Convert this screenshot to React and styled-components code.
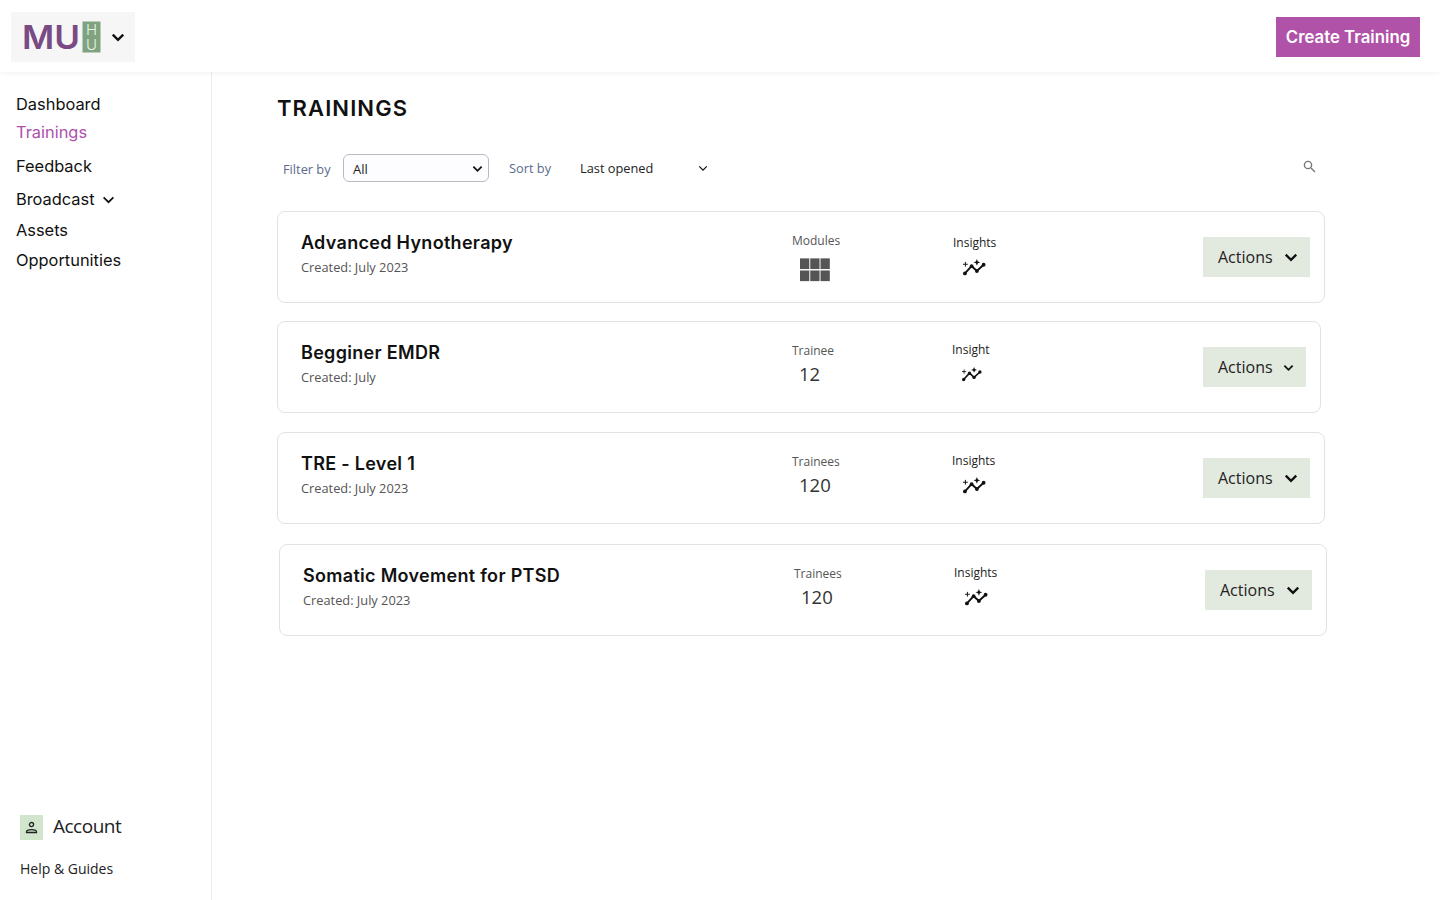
import React from "react";
import styled, { createGlobalStyle } from "styled-components";

const Global = createGlobalStyle`
  html, body { margin: 0; padding: 0; background: #fff; }
  body { font-family: "Open Sans", "Liberation Sans", sans-serif; color: #111; }
  * { box-sizing: border-box; }
`;

const Page = styled.div`
  width: 1440px;
  height: 900px;
  display: flex;
  flex-direction: column;
  overflow: hidden;
`;

const Header = styled.header`
  height: 72px;
  flex: none;
  display: flex;
  align-items: flex-start;
  justify-content: space-between;
  padding: 12px 20px 0 11px;
  box-shadow: 0 1px 5px rgba(0, 0, 0, 0.06);
  position: relative;
`;

const LogoBox = styled.div`
  width: 124px;
  height: 50px;
  background: #f6f6f6;
  display: flex;
  align-items: center;
  padding-left: 10px;
`;

const LogoMark = styled.svg`
  flex: none;
  display: block;
  overflow: visible;
`;

const LogoChevron = styled.span`
  margin-left: 10px;
  display: flex;
`;

const CreateButton = styled.button`
  margin-top: 5px;
  width: 144px;
  height: 40px;
  border: 0;
  background: #b052a8;
  color: #fff;
  font-family: Inter, sans-serif;
  font-weight: 600;
  font-size: 16.8px;
  padding: 0;
`;

const Body = styled.div`
  flex: 1;
  display: flex;
  min-height: 0;
`;

const Sidebar = styled.aside`
  width: 212px;
  flex: none;
  border-right: 1px solid #ececec;
  display: flex;
  flex-direction: column;
  padding: 22px 0 21px;
`;

const Nav = styled.nav`
  display: flex;
  flex-direction: column;
  padding-left: 16px;
`;

const NavItem = styled.a`
  font-family: Inter, sans-serif;
  font-size: 16.4px;
  line-height: 20px;
  height: 20px;
  margin-bottom: ${(p) => p.$gap}px;
  color: ${(p) => (p.$active ? "#ae4fae" : "#111")};
  display: flex;
  align-items: center;
  gap: 7px;
`;

const SideFoot = styled.div`
  margin-top: auto;
  padding-left: 20px;
`;

const AccountRow = styled.div`
  display: flex;
  align-items: center;
  gap: 10px;
  height: 25px;
  margin-bottom: 19px;
`;

const AccountLabel = styled.span`
  font-size: 19px;
  line-height: 22px;
  letter-spacing: -0.5px;
  color: #222;
  margin-top: -3px;
`;

const AccountIcon = styled.span`
  width: 23px;
  height: 25px;
  background: #d1e5cd;
  display: flex;
  align-items: center;
  justify-content: center;
`;

const Help = styled.div`
  font-size: 14px;
  line-height: 20px;
  color: #222;
`;

const Main = styled.main`
  flex: 1;
  padding: 22px 0 0 65px;
`;

const Title = styled.h1`
  margin: 0;
  font-family: Inter, sans-serif;
  font-weight: 600;
  font-size: 22px;
  line-height: 28px;
  letter-spacing: 1.1px;
  color: #111;
`;

const Toolbar = styled.div`
  margin-top: 32px;
  width: 1048px;
  height: 28px;
  display: flex;
  align-items: center;
  padding-left: 6px;
`;

const ToolLabel = styled.span`
  font-size: 12.8px;
  color: #5b6b8c;
  width: ${(p) => p.$w}px;
  margin-top: ${(p) => p.$top || 0}px;
`;

const SelectBox = styled.div`
  width: 146px;
  height: 28px;
  border: 1px solid #b9bcc2;
  border-radius: 6px;
  background: #fdfdff;
  display: flex;
  align-items: center;
  justify-content: space-between;
  padding: 1px 5px 0 9px;
  font-size: 13px;
  color: #222;
  margin-right: 20px;
`;

const SortValue = styled.div`
  width: 128px;
  display: flex;
  align-items: center;
  justify-content: space-between;
  font-size: 12.8px;
  color: #222;
`;

const SearchGlyph = styled.svg`
  margin-left: auto;
  margin-right: 9px;
  margin-top: -3px;
`;

const CardList = styled.div`
  margin-top: 29px;
  display: flex;
  flex-direction: column;
`;

const Card = styled.article`
  width: ${(p) => p.$w}px;
  height: 92px;
  margin-left: ${(p) => p.$x}px;
  margin-bottom: ${(p) => p.$gap}px;
  border: 1px solid #e2e2e2;
  border-radius: 8px;
  display: grid;
  grid-template-columns: 491px 160px 1fr auto;
  padding: 0 14px 0 23px;
  align-items: start;
`;

const CardName = styled.h2`
  margin: 20px 0 0;
  font-family: Inter, sans-serif;
  font-weight: 600;
  font-size: 18px;
  line-height: 22px;
  letter-spacing: 0.3px;
  color: #111;
`;

const Created = styled.p`
  margin: 5px 0 0;
  font-size: 12.8px;
  line-height: 16px;
  color: #555;
`;

const Stat = styled.div`
  padding-top: ${(p) => p.$top}px;
  padding-left: ${(p) => p.$left || 0}px;
  display: flex;
  flex-direction: column;
`;

const StatLabel = styled.span`
  font-size: 12px;
  line-height: 16px;
  color: ${(p) => (p.$dark ? "#222" : "#555")};
`;

const StatValue = styled.span`
  font-size: 18.5px;
  line-height: 24px;
  margin-left: 7px;
  color: #333;
  margin-top: 3px;
`;

const GridIcon = styled.svg`
  margin: 9px 0 0 8px;
`;

const SparkIcon = styled.svg`
  margin: ${(p) => p.$top}px 0 0 ${(p) => p.$x}px;
`;

const ActionsButton = styled.button`
  margin-top: 25px;
  width: ${(p) => p.$w}px;
  height: 40px;
  border: 0;
  background: #e2e9df;
  color: #222;
  font-family: "Open Sans", sans-serif;
  font-size: 16px;
  display: flex;
  align-items: center;
  justify-content: space-between;
  padding: 0 12px 0 15px;
`;

const Chevron = ({ size = 12, stroke = "#111", width = 2 }) => (
  <svg width={size} height={size} viewBox="0 0 12 12" fill="none">
    <path d="M1.5 4 6 8.5 10.5 4" stroke={stroke} strokeWidth={width} />
  </svg>
);

const Logo = () => (
  <LogoMark width="80" height="32" viewBox="0 0 80 32">
    <text x="1" y="28" fontFamily="Inter, sans-serif" fontWeight="600" fontSize="33" fill="#7a4a85" textLength="58" lengthAdjust="spacingAndGlyphs">
      MU
    </text>
    <rect x="61.5" y="0.5" width="18" height="31" fill="#7fa37f" />
    <text x="70.5" y="13.8" textAnchor="middle" fontFamily="Inter, sans-serif" fontWeight="300" fontSize="15" fill="#e9f1e8">
      H
    </text>
    <text x="70.5" y="29" textAnchor="middle" fontFamily="Inter, sans-serif" fontWeight="300" fontSize="15" fill="#e9f1e8">
      U
    </text>
  </LogoMark>
);

const Spark = ({ x, w = 23, top }) => (
  <SparkIcon $x={x} $top={top} width={w} height={w * 0.75} viewBox="0 0 24 18" fill="none">
    <path d="M2 15 9 7.5 14.5 12.5 21.5 6" stroke="#111" strokeWidth="2" />
    <circle cx="2" cy="15" r="2" fill="#111" />
    <circle cx="9" cy="7.5" r="2" fill="#111" />
    <circle cx="14.5" cy="12.5" r="2" fill="#111" />
    <circle cx="21.5" cy="6" r="2" fill="#111" />
    <path d="M2.5 3v5M0 5.5h5" stroke="#111" strokeWidth="1" />
    <path d="M14.5 0l1 2.5 2.5 1-2.5 1-1 2.5-1-2.5-2.5-1 2.5-1z" fill="#111" />
  </SparkIcon>
);

const Grid = () => (
  <GridIcon width="30" height="24" viewBox="0 0 31 24" fill="#555">
    <rect x="0" y="0" width="9.6" height="11" />
    <rect x="10.6" y="0" width="9.6" height="11" />
    <rect x="21.2" y="0" width="9.6" height="11" />
    <rect x="0" y="12.5" width="9.6" height="11" />
    <rect x="10.6" y="12.5" width="9.6" height="11" />
    <rect x="21.2" y="12.5" width="9.6" height="11" />
  </GridIcon>
);

const cards = [
  { name: "Advanced Hynotherapy", created: "Created: July 2023", w: 1048, x: 0, gap: 18, aw: 107, label: "Modules", top: 21, ilabel: "Insights", itop: 23, il: 1, ix: 10, grid: true },
  { name: "Begginer EMDR", created: "Created: July", w: 1044, x: 0, gap: 19, aw: 103, cs: 11, label: "Trainee", value: "12", top: 21, ilabel: "Insight", itop: 20, ix: 10, iw: 20, it: 9 },
  { name: "TRE - Level 1", created: "Created: July 2023", w: 1048, x: 0, gap: 20, aw: 107, label: "Trainees", value: "120", top: 21, ilabel: "Insights", itop: 20, ix: 11 },
  { name: "Somatic Movement for PTSD", created: "Created: July 2023", w: 1048, x: 2, gap: 0, aw: 107, label: "Trainees", value: "120", top: 21, ilabel: "Insights", itop: 20, ix: 11 },
];

const navItems = [
  { label: "Dashboard", gap: 8 },
  { label: "Trainings", gap: 14, active: true },
  { label: "Feedback", gap: 13 },
  { label: "Broadcast", gap: 11, chevron: true },
  { label: "Assets", gap: 10 },
  { label: "Opportunities", gap: 0 },
];

export default function App() {
  return (
    <Page>
      <Global />
      <Header>
        <LogoBox>
          <Logo />
          <LogoChevron>
            <Chevron size={14} />
          </LogoChevron>
        </LogoBox>
        <CreateButton>Create Training</CreateButton>
      </Header>
      <Body>
        <Sidebar>
          <Nav>
            {navItems.map((n) => (
              <NavItem key={n.label} $gap={n.gap} $active={n.active}>
                {n.label}
                {n.chevron && <Chevron size={13} width={1.6} />}
              </NavItem>
            ))}
          </Nav>
          <SideFoot>
            <AccountRow>
              <AccountIcon>
                <svg width="13" height="13" viewBox="0 0 13 13" fill="none" stroke="#222" strokeWidth="1.3">
                  <circle cx="6.5" cy="3.6" r="2.1" />
                  <path d="M1.5 11.5v-.6c0-1.4 2.6-2.2 5-2.2s5 .8 5 2.2v.6z" />
                </svg>
              </AccountIcon>
              <AccountLabel>Account</AccountLabel>
            </AccountRow>
            <Help>Help &amp; Guides</Help>
          </SideFoot>
        </Sidebar>
        <Main>
          <Title>TRAININGS</Title>
          <Toolbar>
            <ToolLabel $w={60} $top={2}>Filter by</ToolLabel>
            <SelectBox>
              All
              <Chevron size={11} width={2} />
            </SelectBox>
            <ToolLabel $w={71}>Sort by</ToolLabel>
            <SortValue>
              Last opened
              <Chevron size={10} width={1.5} />
            </SortValue>
            <SearchGlyph width="13" height="13" viewBox="0 0 13 13" fill="none" stroke="#777" strokeWidth="1.4">
              <circle cx="5" cy="5" r="3.6" />
              <path d="M8 8l4 4" />
            </SearchGlyph>
          </Toolbar>
          <CardList>
            {cards.map((c) => (
              <Card key={c.name} $w={c.w} $x={c.x} $gap={c.gap}>
                <div>
                  <CardName>{c.name}</CardName>
                  <Created>{c.created}</Created>
                </div>
                <Stat $top={c.top}>
                  <StatLabel>{c.label}</StatLabel>
                  {c.grid ? <Grid /> : <StatValue>{c.value}</StatValue>}
                </Stat>
                <Stat $top={c.itop} $left={c.il}>
                  <StatLabel $dark>{c.ilabel}</StatLabel>
                  <Spark x={c.ix} w={c.iw} top={c.it ?? 8} />
                </Stat>
                <ActionsButton $w={c.aw}>
                  Actions
                  <Chevron size={c.cs || 14} width={2} />
                </ActionsButton>
              </Card>
            ))}
          </CardList>
        </Main>
      </Body>
    </Page>
  );
}
